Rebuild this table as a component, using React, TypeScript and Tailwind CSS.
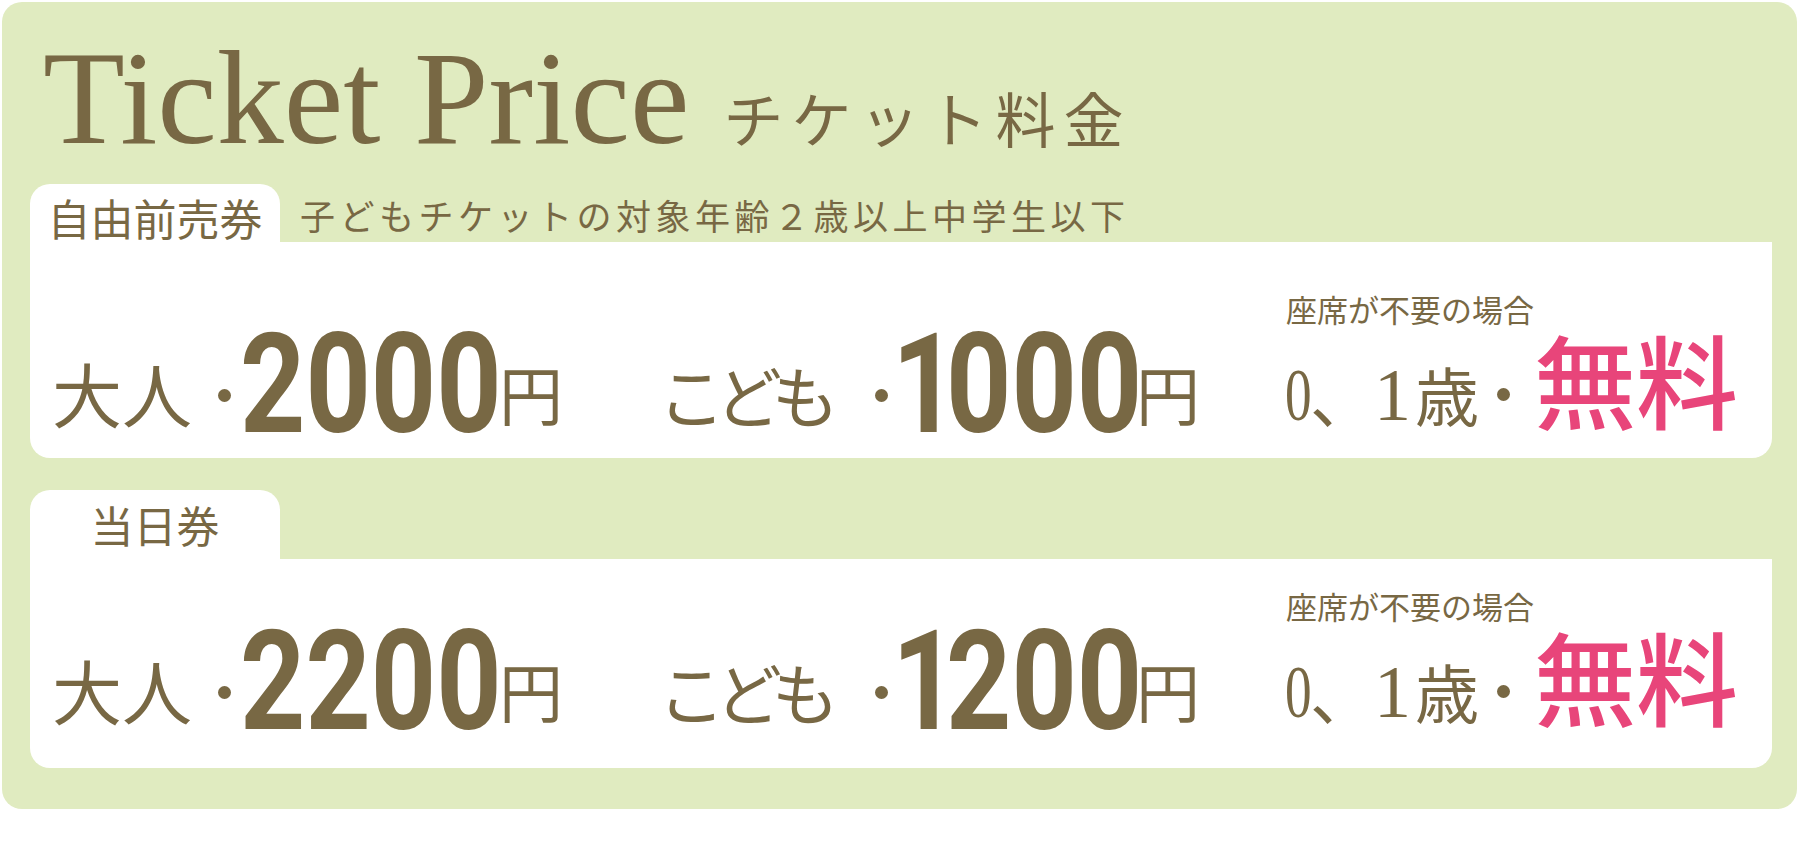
import React from "react";

const CJK = "font-['Noto_Sans_CJK_JP',sans-serif]";

function Dot({ cls }: { cls: string }) {
  return <span className={"block shrink-0 w-[13px] h-[13px] rounded-full bg-[#786844] " + cls} />;
}

function PriceRow({ adult, child }: { adult: string; child: string }) {
  return (
    <div className={"flex items-end h-full pl-[22px] text-[#786844] " + CJK}>
      <span className="text-[70px] leading-none mb-[30px] whitespace-nowrap">大人</span>
      <Dot cls="ml-[26px] mb-[56px]" />
      <span className="ml-[9px] w-[256px] shrink-0 mb-[4px] text-[139px] leading-none font-bold font-['Roboto',sans-serif]">
        <span className="inline-block origin-left scale-x-[0.82] whitespace-nowrap">{adult}</span>
      </span>
      <span className="ml-[3px] text-[64px] leading-none mb-[34px]">円</span>
      <span className="ml-[95px] text-[67px] tracking-[-10px] leading-none mb-[31px] whitespace-nowrap">こども</span>
      <Dot cls="ml-[46px] mb-[56px]" />
      <span className="ml-[4px] w-[245px] shrink-0 mb-[4px] text-[139px] leading-none font-bold font-['Roboto',sans-serif]">
        <span className="inline-block origin-left scale-x-[0.82] whitespace-nowrap">
          <span className="tracking-[-0.1em]">{child.slice(0, 1)}</span>
          {child.slice(1)}
        </span>
      </span>
      <span className="ml-[-1px] text-[64px] leading-none mb-[34px]">円</span>
      <div className="ml-[85px] flex flex-col">
        <span className="text-[31px] leading-none mb-[3px] pl-[1px] whitespace-nowrap">座席が不要の場合</span>
        <div className="flex items-end">
          <span className="w-[25px] shrink-0 font-['Liberation_Serif',serif] text-[74px] leading-none mb-[26px]">
            <span className="inline-block origin-left scale-x-[0.72]">0</span>
          </span>
          <span className="text-[64px] leading-none mb-[31px]">、</span>
          <span className="font-['Liberation_Serif',serif] text-[74px] leading-none mb-[26px]">1</span>
          <span className="ml-[4px] text-[64px] leading-none mb-[33px]">歳</span>
          <Dot cls="ml-[18px] mb-[57px]" />
          <span className="ml-[24px] text-[102px] leading-none mb-[29px] font-medium text-[#e8457a] whitespace-nowrap">
            無料
          </span>
        </div>
      </div>
    </div>
  );
}

export default function App() {
  return (
    <div className="w-[1800px] h-[845px] bg-white pt-[2px] pl-[2px]">
      <div className={"w-[1795px] h-[807px] rounded-[20px] bg-[#e0ebc0] pl-[28px] pr-[25px] pt-[29px] text-[#786844] " + CJK}>
        <div className="flex items-baseline h-[134px]">
          <span className="font-['Liberation_Serif',serif] text-[134px] leading-none pl-[13px] whitespace-nowrap">
            Ticket Price
          </span>
          <span className="ml-[34px] text-[60px] tracking-[8px] leading-none whitespace-nowrap">チケット料金</span>
        </div>

        <div className="mt-[19px] flex items-end h-[58px]">
          <div className="w-[250px] h-[58px] bg-white rounded-t-[20px] pt-[12px] text-center text-[43px] leading-none">
            自由前売券
          </div>
          <span className="ml-[20px] mb-[10px] text-[35px] tracking-[4.5px] leading-none whitespace-nowrap">
            子どもチケットの対象年齢２歳以上中学生以下
          </span>
        </div>
        <div className="h-[216px] bg-white rounded-bl-[20px] rounded-br-[20px]">
          <PriceRow adult="2000" child="1000" />
        </div>

        <div className="mt-[32px] flex items-end h-[69px]">
          <div className="w-[250px] h-[69px] bg-white rounded-t-[20px] pt-[13px] text-center text-[43px] leading-none">
            当日券
          </div>
        </div>
        <div className="h-[209px] bg-white rounded-bl-[20px] rounded-br-[20px] pb-[13px]">
          <PriceRow adult="2200" child="1200" />
        </div>
      </div>
    </div>
  );
}
